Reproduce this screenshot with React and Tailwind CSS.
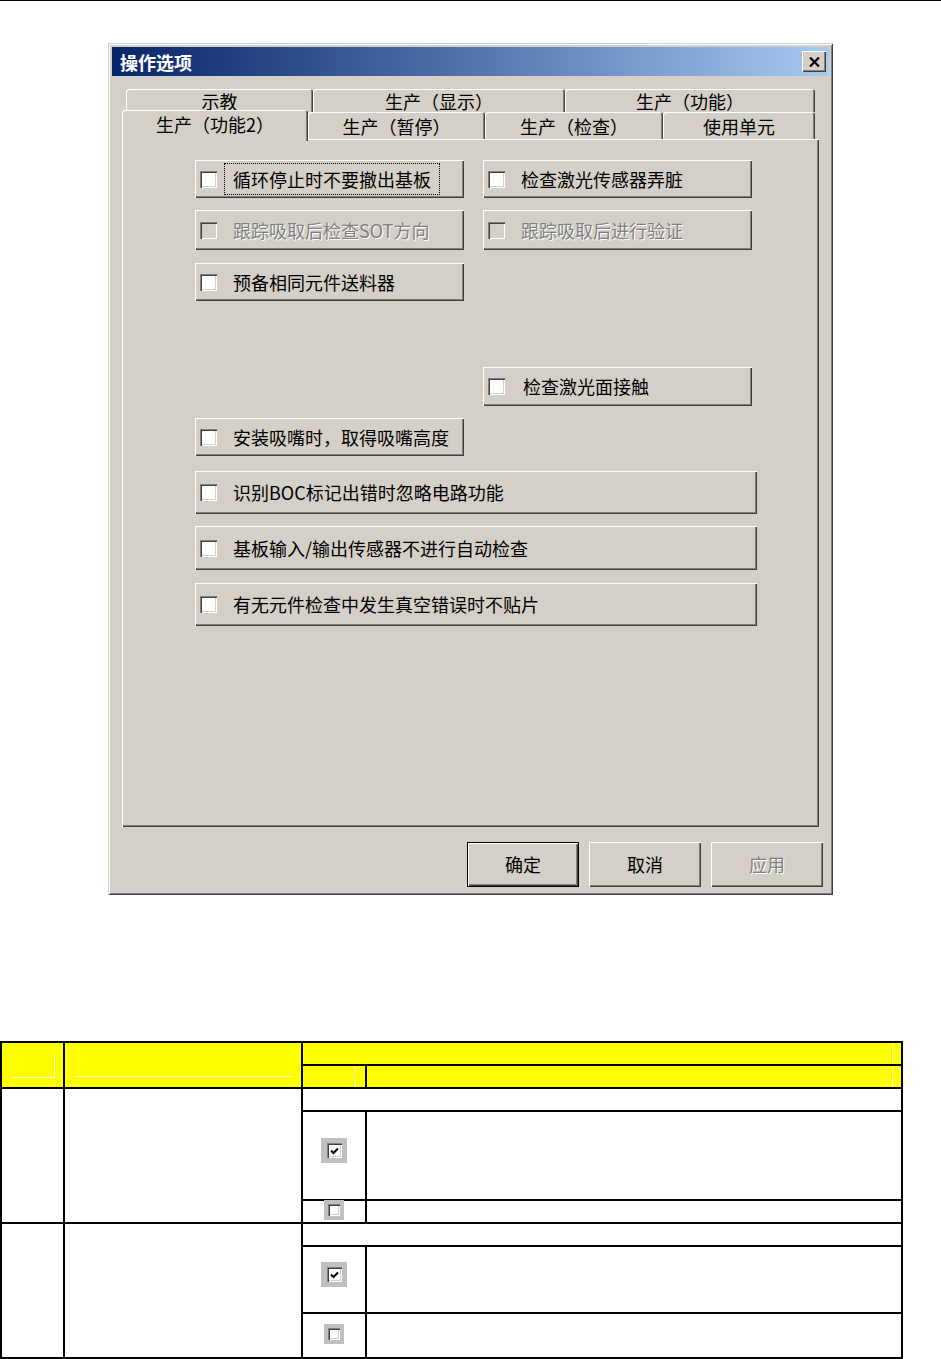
import React from "react";

const RAISED = "shadow-[inset_1px_1px_0_#ffffff,inset_-1px_-1px_0_#404040,inset_-2px_-2px_0_#808080]";
const SUNKEN = "shadow-[inset_1px_1px_0_#808080,inset_2px_2px_0_#404040,inset_-1px_-1px_0_#ffffff,inset_-2px_-2px_0_#d4d0c8]";
const DIM = "text-[#808080] [text-shadow:1px_1px_0_#ffffff]";

function Box({ disabled }) {
  return <span className={`w-[17px] h-[17px] shrink-0 ${SUNKEN} ${disabled ? "bg-[#d4d0c8]" : "bg-white"}`} />;
}

function Opt({ label, wide, right, disabled, focus, h, mt }) {
  const width = wide ? "w-[562px]" : "w-[269px]";
  return (
    <div className={`${width} ${h} ${mt} ${right ? "ml-[288px]" : ""} bg-[#d4d0c8] ${RAISED} flex items-center pl-[5px]`}>
      <Box disabled={disabled} />
      {focus ? (
        <span className="ml-[7px] px-[8px] py-[3px] border border-dotted border-black leading-[24px]">{label}</span>
      ) : (
        <span className={`${right ? "ml-[18px]" : "ml-[16px]"} ${disabled ? DIM : ""}`}>{label}</span>
      )}
    </div>
  );
}

function Tab({ label, w, selected }) {
  return (
    <div
      className={`${w} ${selected ? "h-[31px] -mb-[2px] relative z-10 pb-[4px]" : "h-[27px]"} bg-[#d4d0c8] rounded-t-[3px] shadow-[inset_1px_1px_0_#ffffff,inset_-1px_0_0_#404040,inset_-2px_0_0_#808080] flex items-center justify-center leading-none`}
    >
      {label}
    </div>
  );
}

function BackTab({ label, w }) {
  return (
    <div className={`${w} h-[23px] bg-[#d4d0c8] rounded-t-[3px] shadow-[inset_1px_1px_0_#ffffff,inset_-1px_0_0_#404040,inset_-2px_0_0_#808080] flex items-center justify-center leading-none`}>
      {label}
    </div>
  );
}

function Btn({ label, def, disabled }) {
  return (
    <div className={`w-[112px] h-[45px] bg-[#d4d0c8] flex items-center justify-center ${def ? "border border-black shadow-[inset_1px_1px_0_#ffffff,inset_-1px_-1px_0_#404040,inset_-2px_-2px_0_#808080]" : RAISED} ${disabled ? DIM : ""}`}>
      {label}
    </div>
  );
}

function Dialog() {
  return (
    <div className="ml-[108px] mt-[42px] w-[725px] h-[852px] bg-[#d4d0c8] p-[4px] flex flex-col shadow-[inset_1px_1px_0_#d4d0c8,inset_-1px_-1px_0_#404040,inset_2px_2px_0_#ffffff,inset_-2px_-2px_0_#808080] text-[18px] text-black">
      <div className="h-[29px] shrink-0 bg-gradient-to-r from-[#0a246a] to-[#a6caf0] flex items-center justify-between pl-[8px] pr-[3px]">
        <span className="text-white font-bold text-[18px] leading-none">操作选项</span>
        <span className={`w-[24px] h-[21px] bg-[#d4d0c8] ${RAISED} flex items-center justify-center`}>
          <svg width="11" height="10" viewBox="0 0 11 10">
            <path d="M1 0.5 L10 9.5 M10 0.5 L1 9.5" stroke="#000" strokeWidth="2.2" />
          </svg>
        </span>
      </div>

      <div className="px-[10px] mt-[13px]">
        <div className="flex ml-[4px]">
          <BackTab label="示教" w="w-[187px]" />
          <BackTab label="生产（显示）" w="w-[252px]" />
          <BackTab label="生产（功能）" w="w-[250px]" />
        </div>
        <div className="flex items-end -mt-[2px] relative z-10">
          <Tab label="生产（功能2）" w="w-[186px]" selected />
          <Tab label="生产（暂停）" w="w-[177px]" />
          <Tab label="生产（检查）" w="w-[178px]" />
          <Tab label="使用单元" w="w-[152px]" />
        </div>
        <div className="h-[688px] bg-[#d4d0c8] shadow-[inset_1px_1px_0_#ffffff,inset_-1px_-1px_0_#404040,inset_-2px_-2px_0_#808080] pl-[73px] pt-[21px] flex flex-col">
          <div className="flex gap-[19px]">
            <Opt label="循环停止时不要撤出基板" focus h="h-[38px]" />
            <Opt label="检查激光传感器弄脏" h="h-[38px]" />
          </div>
          <div className="flex gap-[19px] mt-[12px]">
            <Opt label="跟踪吸取后检查SOT方向" disabled h="h-[40px]" />
            <Opt label="跟踪吸取后进行验证" disabled h="h-[40px]" />
          </div>
          <Opt label="预备相同元件送料器" h="h-[38px]" mt="mt-[13px]" />
          <Opt label="检查激光面接触" right h="h-[39px]" mt="mt-[66px]" />
          <Opt label="安装吸嘴时，取得吸嘴高度" h="h-[38px]" mt="mt-[12px]" />
          <Opt label="识别BOC标记出错时忽略电路功能" wide h="h-[43px]" mt="mt-[15px]" />
          <Opt label="基板输入/输出传感器不进行自动检查" wide h="h-[44px]" mt="mt-[12px]" />
          <Opt label="有无元件检查中发生真空错误时不贴片" wide h="h-[43px]" mt="mt-[13px]" />
        </div>
      </div>

      <div className="flex justify-end gap-[10px] pr-[6px] mt-[15px]">
        <Btn label="确定" def />
        <Btn label="取消" />
        <Btn label="应用" disabled />
      </div>
    </div>
  );
}

function TableCheck({ checked }) {
  if (checked) {
    return (
      <span className="w-[26px] h-[25px] bg-[#c0c0c0] flex items-center justify-center">
        <span className={`w-[15px] h-[15px] bg-white ${SUNKEN} flex items-center justify-center`}>
          <svg width="9" height="8" viewBox="0 0 9 8" className="ml-[1px] mt-[1px]">
            <path d="M1 3.5 L3.5 6 L8 1.5" stroke="#000" strokeWidth="2" fill="none" />
          </svg>
        </span>
      </span>
    );
  }
  return (
    <span className="w-[20px] h-[20px] bg-[#c0c0c0] flex items-center justify-center">
      <span className={`w-[12px] h-[12px] bg-white ${SUNKEN}`} />
    </span>
  );
}

function SpecTable() {
  const Y = "bg-[#ffff00]";
  const W = "bg-white";
  return (
    <div className="mt-[146px] w-[903px] grid grid-cols-[61px_236px_62px_534px] grid-rows-[21px_21px_21px_87px_21px_21px_65px_43px] gap-[2px] p-[2px] bg-black">
      <div className={`${Y} row-span-2 pl-[10px] pt-[12px]`}>
        <div className="w-[43px] h-[23px] border-r border-b border-[#ffffc8]" />
      </div>
      <div className={`${Y} row-span-2 pl-[10px] pt-[33px]`}>
        <div className="w-[217px] border-b border-[#ffffc8]" />
      </div>
      <div className={`${Y} col-span-2`}>
        <div className="w-[590px] h-full border-r border-[#ffffc8]" />
      </div>
      <div className={Y}>
        <div className="w-[53px] h-full border-r border-[#ffffc8]" />
      </div>
      <div className={Y}>
        <div className="w-[526px] h-full border-r border-[#ffffc8]" />
      </div>

      <div className={`${W} row-span-3`} />
      <div className={`${W} row-span-3`} />
      <div className={`${W} col-span-2`} />
      <div className={`${W} flex items-center justify-center pb-[10px]`}>
        <TableCheck checked />
      </div>
      <div className={W} />
      <div className={`${W} flex items-center justify-center pb-[4px]`}>
        <TableCheck />
      </div>
      <div className={W} />

      <div className={`${W} row-span-3`} />
      <div className={`${W} row-span-3`} />
      <div className={`${W} col-span-2`} />
      <div className={`${W} flex items-center justify-center pb-[10px]`}>
        <TableCheck checked />
      </div>
      <div className={W} />
      <div className={`${W} flex items-center justify-center pb-[4px]`}>
        <TableCheck />
      </div>
      <div className={W} />
    </div>
  );
}

export default function App() {
  return (
    <div className="w-[941px] h-[1359px] bg-white overflow-hidden font-['Noto_Sans_CJK_SC','Noto_Sans',sans-serif]">
      <div className="h-[1px] bg-black" />
      <Dialog />
      <SpecTable />
    </div>
  );
}
